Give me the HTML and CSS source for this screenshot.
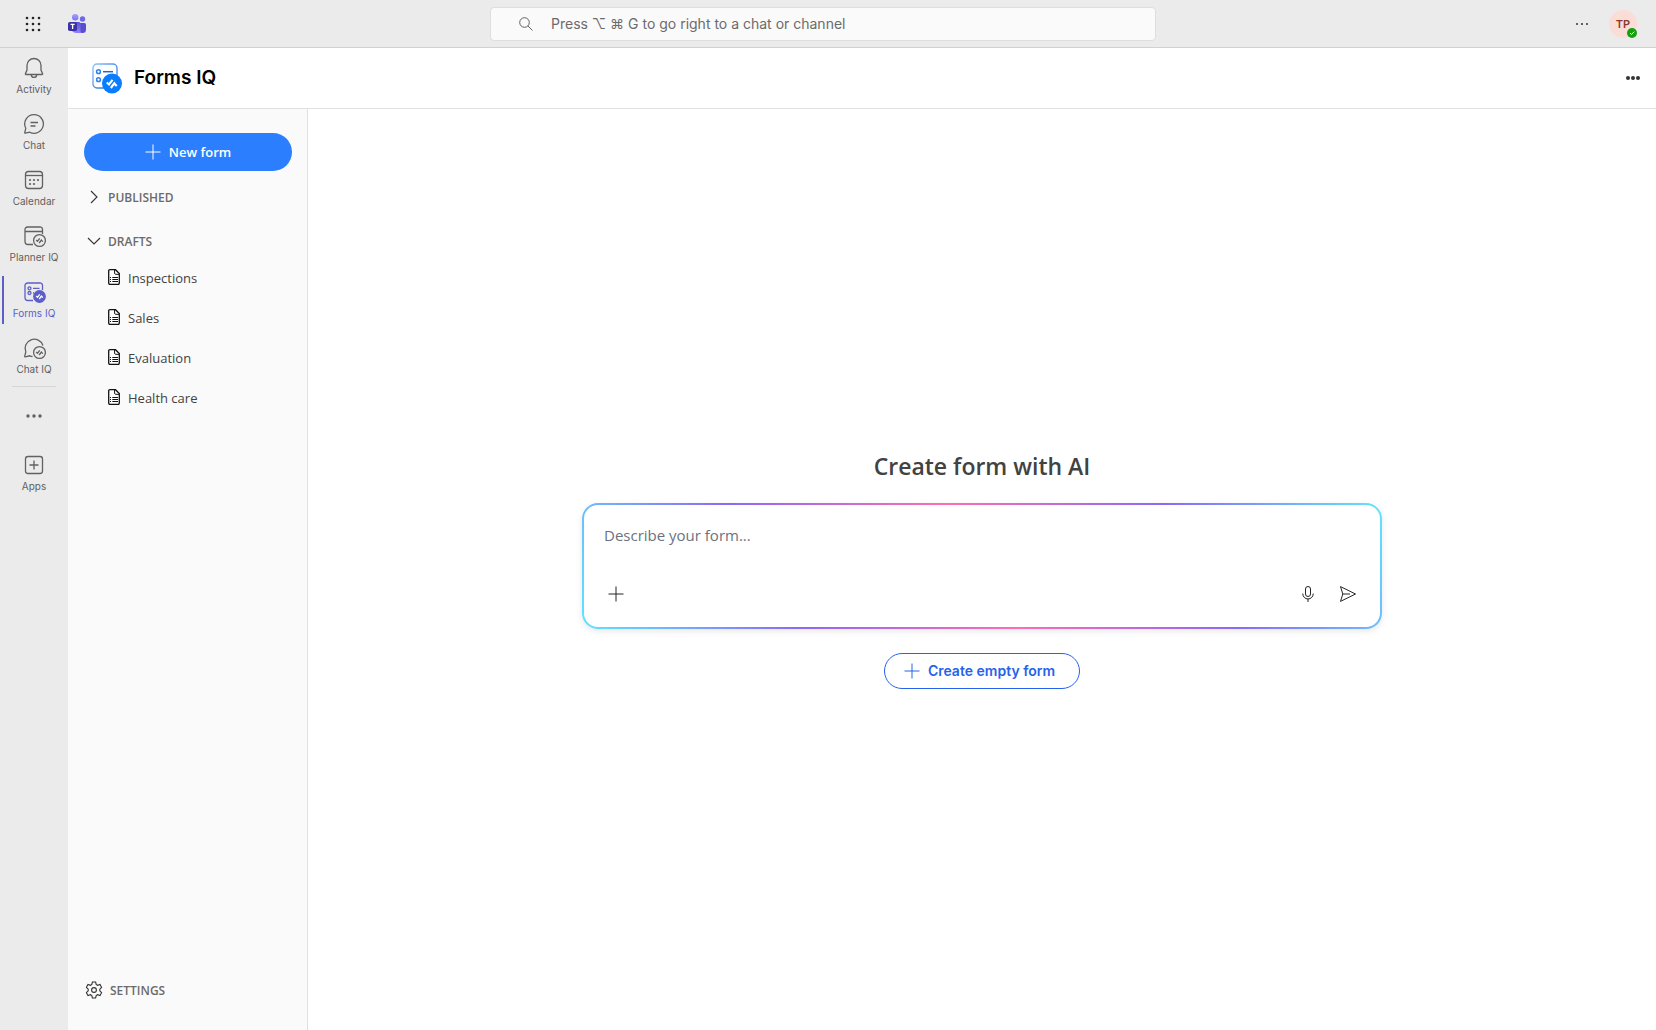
FILE: index.html
```html
<!DOCTYPE html>
<html lang="en">
<head>
<meta charset="utf-8">
<title>Forms IQ</title>
<link rel="stylesheet" href="styles.css">
</head>
<body>
<svg class="defs" aria-hidden="true">
  <defs>
    <linearGradient id="formGrad" x1="0" y1="0" x2="1" y2="1"><stop offset="0" stop-color="#8cc4ff"/><stop offset="1" stop-color="#1464d8"/></linearGradient>
    <linearGradient id="teamsBody" x1="0" y1="0" x2="0" y2="1"><stop offset="0" stop-color="#5b50d6"/><stop offset="1" stop-color="#8f82ff"/></linearGradient>
    <linearGradient id="teamsHead" x1="0" y1="0" x2="0" y2="1"><stop offset="0" stop-color="#a3a0ff"/><stop offset="1" stop-color="#7b72f0"/></linearGradient>
    <symbol id="doc" viewBox="0 0 12 16"><path d="M1.9.7h5.6l3.8 3.8v9.6a1.2 1.2 0 0 1-1.2 1.2H1.9a1.2 1.2 0 0 1-1.2-1.2V1.9A1.2 1.2 0 0 1 1.9.7z" fill="#fff" stroke="#111" stroke-width="1.3"/><path d="M6.6.8v3.4c0 .7.4 1.100 1.100 1.100h3.500M4.300 8.500h5.700M4.300 10.500h5.700M4.300 12.500h5.700M2 8.500h1M2 10.500h1M2 12.500h1" fill="none" stroke="#111"/></symbol>
    <symbol id="plus" viewBox="0 0 16 16"><path d="M8 .5v15M.5 8h15" fill="none" stroke="currentColor"/></symbol>
    <symbol id="pulse" viewBox="0 0 12 12"><path d="M2.700 5.500L4 6.800 6.200 3.800M5.700 8.500L7.900 5.500 9.300 7.200" fill="none" stroke="currentColor" stroke-width="1.300"/></symbol>
    <symbol id="dots" viewBox="0 0 16 4"><circle cx="2" cy="2" r="1.700"/><circle cx="8" cy="2" r="1.700"/><circle cx="14" cy="2" r="1.700"/></symbol>
  </defs>
</svg>
<header class="topbar">
  <div class="topbar-start">
    <button class="icon-button" aria-label="App launcher"><svg width="16" height="16" fill="#242424"><circle cx="2" cy="2" r="1.300"/><circle cx="8" cy="2" r="1.300"/><circle cx="14" cy="2" r="1.300"/><circle cx="2" cy="8" r="1.300"/><circle cx="8" cy="8" r="1.300"/><circle cx="14" cy="8" r="1.300"/><circle cx="2" cy="14" r="1.300"/><circle cx="8" cy="14" r="1.300"/><circle cx="14" cy="14" r="1.300"/></svg></button>
    <svg class="teams" width="18" height="20" viewBox="0 0 18 20" role="img" aria-label="Teams"><circle cx="14.500" cy="5" r="2.700" fill="#7067ea"/><circle cx="7.200" cy="3.300" r="3.200" fill="url(#teamsHead)"/><path d="M12 9h4.500A1.500 1.500 0 0 1 18 10.500v5a3.500 3.500 0 0 1-3.500 3.500H11z" fill="#5a4ed0"/><path d="M3 8h8a1.500 1.500 0 0 1 1.500 1.500v7.500q0 1.500 1.200 2H8a5 5 0 0 1-5-5z" fill="url(#teamsBody)"/><rect y="8" width="9" height="9" rx="1.700" fill="#3d31a8"/><path d="M2.500 10.300h4.200M4.600 10.300v4.700" stroke="#fff" stroke-width="1.300"/></svg>
  </div>
  <label class="search">
    <svg width="14" height="14" fill="none" stroke="#616161"><circle cx="5.500" cy="5.500" r="4.800"/><path d="M9 9l4.500 4.500"/></svg>
    <input type="search" aria-label="Search" placeholder="Press ⌥ ⌘ G to go right to a chat or channel">
  </label>
  <div class="topbar-end">
    <button class="icon-button" aria-label="More options"><svg width="14" height="4" fill="#424242"><circle cx="2" cy="2" r="1.100"/><circle cx="7" cy="2" r="1.100"/><circle cx="12" cy="2" r="1.100"/></svg></button>
    <button class="avatar" aria-label="Account: TP">TP<svg class="presence" width="10" height="10"><circle cx="5" cy="5" r="5" fill="#13a10e"/><path d="M3 5l1.500 1.500L7.200 3.700" fill="none" stroke="#fff"/></svg></button>
  </div>
</header>
<div class="shell">
  <nav class="rail" aria-label="Apps">
    <a class="rail-item" href="#"><svg width="24" height="24" viewBox="0 0 24 24"><path d="M12 2.500a7 7 0 0 0-7 7V14l-1.600 3.700c-.1.400.1.800.5.800h16.200c.400 0 .6-.4.500-.8L19 14V9.500a7 7 0 0 0-7-7zM9.300 18.700a2.700 2.700 0 0 0 5.400 0"/></svg>Activity</a>
    <a class="rail-item" href="#"><svg width="24" height="24" viewBox="0 0 24 24"><path d="M12 2.700a9.300 9.300 0 1 1-4.300 17.500L3.300 21.200a.5.500 0 0 1-.6-.6L3.800 16.300A9.300 9.300 0 0 1 12 2.700zM8.500 10.500h7.500M8.500 14h5"/></svg>Chat</a>
    <a class="rail-item" href="#"><svg width="24" height="24" viewBox="0 0 24 24"><rect x="3.500" y="3.500" width="17" height="17" rx="3"/><path d="M3.500 7.500h17"/><g class="filled"><circle cx="8" cy="12" r="1.100"/><circle cx="12" cy="12" r="1.100"/><circle cx="16" cy="12" r="1.100"/><circle cx="8" cy="16" r="1.100"/><circle cx="12" cy="16" r="1.100"/></g></svg>Calendar</a>
    <a class="rail-item" href="#"><svg width="24" height="24" viewBox="0 0 24 24"><path d="M11 20.500H6a3 3 0 0 1-3-3v-12a2.500 2.500 0 0 1 2.500-2.500h12A2.500 2.500 0 0 1 20.500 5.500V10M3 7.500h17.500"/><circle cx="17.500" cy="16.500" r="5.900"/><use href="#pulse" x="11.500" y="10.500" width="12" height="12"/></svg>Planner IQ</a>
    <a class="rail-item active" href="#" aria-current="page"><svg width="24" height="24" viewBox="0 0 24 24"><path d="M11 20.500H6a3 3 0 0 1-3-3v-12A2.500 2.500 0 0 1 5.500 3h12A2.500 2.500 0 0 1 20.500 5.500V10M11 8.300h6.500M11 13h1"/><circle cx="7.500" cy="8.300" r="1.500"/><circle cx="7.500" cy="13" r="1.500"/><circle class="filled" cx="17.500" cy="16.500" r="6.400"/><use class="knockout" href="#pulse" x="11.500" y="10.500" width="12" height="12"/></svg>Forms IQ</a>
    <a class="rail-item" href="#"><svg width="24" height="24" viewBox="0 0 24 24"><path d="M10.500 20.500c-1 0-2-.3-2.800-.7L3.300 20.800a.5.500 0 0 1-.6-.6L3.800 16A9.200 9.200 0 1 1 21 9.500"/><circle cx="17.500" cy="16.500" r="5.900"/><use href="#pulse" x="11.500" y="10.500" width="12" height="12"/></svg>Chat IQ</a>
    <hr>
    <button class="rail-more" aria-label="More apps"><svg width="16" height="4"><use href="#dots"/></svg></button>
    <a class="rail-item" href="#"><svg width="24" height="24" viewBox="0 0 24 24"><rect x="3.500" y="3.500" width="17" height="17" rx="2.500"/><path d="M12 7.500v9M7.500 12h9"/></svg>Apps</a>
  </nav>
  <div class="app">
    <header class="app-header">
      <svg width="32" height="32" viewBox="0 -1 32 32" aria-hidden="true"><rect x="1" y="1" width="24" height="24" rx="4" fill="#fff" stroke="url(#formGrad)" stroke-width="1.300"/><g fill="none" stroke="#2f80ee" stroke-width="1.500"><circle cx="6.500" cy="8.700" r="1.900"/><circle cx="6.500" cy="16.700" r="1.900"/><path d="M11 8.700h10" stroke="#1a6ad8"/></g><circle cx="20" cy="20.500" r="10" fill="#0a7cff"/><path d="M14.800 19.500l2.200 2 3.500-4.700M18.800 25l3.500-4.700 2.400 2.900" fill="none" stroke="#fff" stroke-width="2.100"/></svg>
      <h1>Forms IQ</h1>
      <button class="icon-button app-more" aria-label="More"><svg width="14" height="4" fill="#333"><circle cx="2" cy="2" r="2"/><circle cx="7" cy="2" r="2"/><circle cx="12" cy="2" r="2"/></svg></button>
    </header>
    <div class="workspace">
      <aside class="sidebar">
        <button class="new-form"><svg width="16" height="16"><use href="#plus"/></svg>New form</button>
        <button class="group" aria-expanded="false"><svg width="14" height="14"><path d="M4 1l6 6-6 6"/></svg>PUBLISHED</button>
        <button class="group" aria-expanded="true"><svg width="14" height="14"><path d="M1 4l6 6 6-6"/></svg>DRAFTS</button>
        <ul class="drafts">
          <li><a href="#"><svg width="12" height="16"><use href="#doc"/></svg>Inspections</a></li>
          <li><a href="#"><svg width="12" height="16"><use href="#doc"/></svg>Sales</a></li>
          <li><a href="#"><svg width="12" height="16"><use href="#doc"/></svg>Evaluation</a></li>
          <li><a href="#"><svg width="12" height="16"><use href="#doc"/></svg>Health care</a></li>
        </ul>
        <button class="settings"><svg width="18" height="18" viewBox="0 0 18 18"><path d="M7.400 1h3.200l.6 2.500 1.300.8 2.500-.8 1.600 2.800L14.800 8.200v1.600l1.800 1.900-1.600 2.800-2.500-.8-1.300.8-.6 2.500H7.400l-.6-2.500-1.300-.8-2.500.8-1.600-2.800L3.200 9.800V8.200L1.400 6.300 3 3.500l2.500.8 1.300-.8z"/><circle cx="9" cy="9" r="2.400"/></svg>SETTINGS</button>
      </aside>
      <main>
        <h2>Create form with AI</h2>
        <form class="prompt">
          <textarea rows="1" aria-label="Describe your form" placeholder="Describe your form..."></textarea>
          <div class="prompt-actions">
            <button type="button" aria-label="Attach"><svg width="16" height="16"><use href="#plus"/></svg></button>
            <span class="spacer"></span>
            <button type="button" aria-label="Dictate"><svg width="16" height="16" fill="none" stroke="currentColor"><rect x="5.500" y=".5" width="5" height="10" rx="2.500"/><path d="M2.800 7.500v.3a5.200 5.200 0 0 0 10.400 0v-.3M8 13v3"/></svg></button>
            <button type="button" aria-label="Send"><svg width="16" height="16" fill="none" stroke="currentColor" stroke-linejoin="round"><path d="M.5.600L15.500 8 .5 15.400 2.800 8zM2.800 8H10"/></svg></button>
          </div>
        </form>
        <button class="empty-form"><svg width="16" height="16"><use href="#plus"/></svg>Create empty form</button>
      </main>
    </div>
  </div>
</div>
</body>
</html>
```
FILE: styles.css
```css
* { box-sizing: border-box; }
body {
  margin: 0;
  min-height: 100vh;
  display: flex;
  flex-direction: column;
  font-family: Inter, "Liberation Sans", sans-serif;
  background: #fff;
  color: #424242;
}
button {
  font: inherit;
  color: inherit;
  background: none;
  border: 0;
  padding: 0;
  display: flex;
  align-items: center;
}
a { color: inherit; text-decoration: none; }
svg { flex: none; display: block; }
.defs { position: absolute; width: 0; height: 0; }

.topbar {
  height: 48px;
  display: grid;
  grid-template-columns: 1fr minmax(0, 666px) 1fr;
  align-items: center;
  padding-right: 10px;
  background: #ebebeb;
  border-bottom: 1px solid #d1d1d1;
}
.topbar-start, .topbar-end { display: flex; align-items: center; }
.topbar-start { padding-left: 17px; gap: 19px; }
.topbar-end { justify-content: flex-end; gap: 11px; padding-right: 9px; }
.icon-button { width: 32px; height: 32px; justify-content: center; }
.search {
  height: 34px;
  display: flex;
  align-items: center;
  gap: 18px;
  padding: 0 28px;
  background: #fafafa;
  border: 1px solid #dedede;
  border-radius: 4px;
}
.search input {
  flex: 1;
  min-width: 0;
  border: 0;
  padding: 0;
  background: none;
  outline: 0;
  font: 14px Inter, "DejaVu Sans", sans-serif;
}
.search input::placeholder { color: #6b6b6b; }
.avatar {
  position: relative;
  width: 28px;
  height: 28px;
  justify-content: center;
  border-radius: 50%;
  background: #fbddd8;
  color: #8a3a2c;
  font-size: 11px;
  font-weight: 600;
}
.presence { position: absolute; right: 0; bottom: 0; }

.shell { flex: 1; display: flex; }
.rail {
  width: 68px;
  flex: none;
  display: flex;
  flex-direction: column;
  background: #ebebeb;
}
.rail-item {
  height: 56px;
  padding-top: 8px;
  display: flex;
  flex-direction: column;
  align-items: center;
  gap: 3px;
  font-size: 10px;
  line-height: 12px;
  color: #616161;
}
.rail-item svg { fill: none; stroke: currentColor; stroke-width: 1.3; }
.rail-item .filled { fill: currentColor; stroke: none; }
.rail-item .knockout { color: #fff; }
.rail-item.active {
  color: #5b5fc7;
  background: linear-gradient(#5b5fc7, #5b5fc7) 2px 4px / 2px 48px no-repeat;
}
.rail hr {
  width: 44px;
  height: 1px;
  margin: 2px auto 0;
  border: 0;
  background: #d6d6d6;
}
.rail-more { height: 58px; justify-content: center; fill: #616161; }

.app { flex: 1; min-width: 0; display: flex; flex-direction: column; }
.app-header {
  height: 61px;
  display: flex;
  align-items: center;
  gap: 10px;
  padding: 0 7px 0 24px;
  border-bottom: 1px solid #e0e0e0;
}
h1 { margin: 0; font-size: 19px; line-height: 24px; font-weight: 600; color: #000; }
.app-more { margin-left: auto; }
.workspace { flex: 1; display: flex; }
.sidebar {
  width: 240px;
  flex: none;
  display: flex;
  flex-direction: column;
  padding: 24px 15px 24px 16px;
  background: #fafafa;
  border-right: 1px solid #e0e0e0;
  font-family: "Open Sans", "Noto Sans", sans-serif;
}
.new-form {
  height: 38px;
  justify-content: center;
  gap: 8px;
  border-radius: 19px;
  background: #2b7fff;
  color: #fff;
  font-size: 13px;
  font-weight: 600;
}
.group, .settings {
  gap: 7px;
  font-size: 12px;
  font-weight: 600;
  color: #6b6b6b;
}
.group { height: 44px; padding: 8px 0 0 3px; }
.group svg, .settings svg { fill: none; stroke: #333; stroke-width: 1.1; }
.drafts { list-style: none; margin: -1px 0 0; padding: 0 0 0 24px; }
.drafts a {
  height: 40px;
  display: flex;
  align-items: center;
  gap: 8px;
  font-size: 13px;
}
.drafts svg { margin-bottom: 2px; }
.settings { margin-top: auto; height: 32px; padding-left: 1px; }

main {
  flex: 1;
  min-width: 0;
  display: flex;
  flex-direction: column;
  align-items: center;
  justify-content: center;
  padding: 0 24px;
}
h2 {
  margin: 0 0 22px;
  font: 600 23px/30px "Open Sans", "Noto Sans", sans-serif;
}
.prompt {
  width: 100%;
  max-width: 800px;
  height: 126px;
  display: flex;
  flex-direction: column;
  justify-content: space-between;
  padding: 18px 16px 17px 20px;
  border: 2px solid transparent;
  border-radius: 16px;
  background:
    linear-gradient(#fff, #fff) padding-box,
    linear-gradient(60deg, #5ce6ff, #8c68f8 25%, #ff6cb2 50%, #8c68f8 75%, #5ce6ff) border-box;
  box-shadow: 0 2px 6px rgba(0, 0, 0, 0.1);
}
.prompt textarea {
  height: 24px;
  padding: 0;
  border: 0;
  outline: 0;
  resize: none;
  overflow: hidden;
  background: none;
  font: 15px/24px "Open Sans", "Noto Sans", sans-serif;
}
.prompt textarea::placeholder { color: #6b7280; }
.prompt-actions { display: flex; gap: 8px; color: #242424; }
.prompt-actions button { width: 32px; height: 32px; justify-content: center; }
.prompt-actions button:first-child { margin-left: -4px; }
.spacer { flex: 1; }
.empty-form {
  height: 36px;
  margin-top: 24px;
  gap: 8px;
  padding: 0 24px 0 19px;
  border: 1px solid #2563eb;
  border-radius: 18px;
  color: #2563eb;
  font-size: 14px;
  font-weight: 600;
}
```
